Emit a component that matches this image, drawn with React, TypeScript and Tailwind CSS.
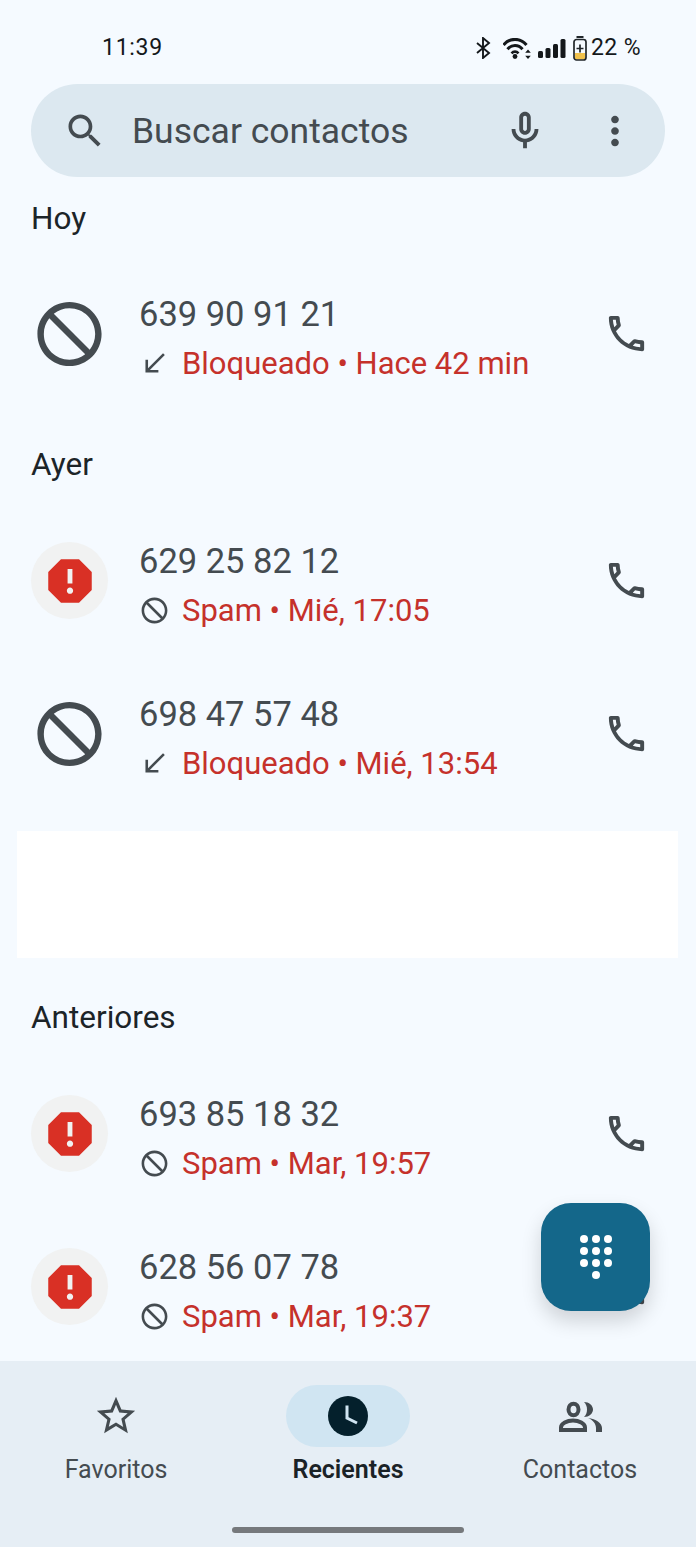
import { ReactNode } from "react"

const PATHS = {
  search:
    "M15.5 14h-.79l-.28-.27C15.41 12.59 16 11.11 16 9.5 16 5.91 13.09 3 9.5 3S3 5.91 3 9.5 5.91 16 9.5 16c1.61 0 3.09-.59 4.23-1.57l.27.28v.79l5 4.99L20.49 19l-4.99-5zm-6 0C7.01 14 5 11.99 5 9.5S7.01 5 9.5 5 14 7.01 14 9.5 11.99 14 9.5 14z",
  mic: "M12 14c1.66 0 3-1.34 3-3V5c0-1.66-1.34-3-3-3S9 3.34 9 5v6c0 1.66 1.34 3 3 3zm-1-9c0-.55.45-1 1-1s1 .45 1 1v6c0 .55-.45 1-1 1s-1-.45-1-1V5zM17 11c0 2.76-2.24 5-5 5s-5-2.24-5-5H5c0 3.53 2.61 6.43 6 6.92V21h2v-3.08c3.39-.49 6-3.39 6-6.92h-2z",
  more: "M12 8c1.1 0 2-.9 2-2s-.9-2-2-2-2 .9-2 2 .9 2 2 2zm0 2c-1.1 0-2 .9-2 2s.9 2 2 2 2-.9 2-2-.9-2-2-2zm0 6c-1.1 0-2 .9-2 2s.9 2 2 2 2-.9 2-2-.9-2-2-2z",
  block:
    "M12 2C6.48 2 2 6.48 2 12s4.48 10 10 10 10-4.48 10-10S17.52 2 12 2zM4 12c0-4.42 3.58-8 8-8 1.85 0 3.55.63 4.9 1.69L5.69 16.9C4.63 15.55 4 13.85 4 12zm8 8c-1.85 0-3.55-.63-4.9-1.69L18.31 7.1C19.37 8.45 20 10.15 20 12c0 4.42-3.58 8-8 8z",
  received: "M20 5.41L18.59 4 7 15.59V9H5v10h10v-2H8.41z",
  phone:
    "M6.54 5c.06.89.21 1.76.45 2.59l-1.2 1.2c-.41-1.2-.67-2.47-.76-3.79h1.51m9.86 12.02c.85.24 1.72.39 2.6.45v1.49c-1.32-.09-2.59-.35-3.8-.75l1.2-1.19M7.5 3H4c-.55 0-1 .45-1 1 0 9.39 7.61 17 17 17 .55 0 1-.45 1-1v-3.49c0-.55-.45-1-1-1-1.24 0-2.45-.2-3.57-.57-.1-.04-.21-.05-.31-.05-.26 0-.51.1-.71.29l-2.2 2.2c-2.83-1.45-5.15-3.76-6.59-6.59l2.2-2.2c.28-.28.36-.67.25-1.02C8.7 6.45 8.5 5.25 8.5 4c0-.55-.45-1-1-1z",
  report:
    "M15.73 3H8.27L3 8.27v7.46L8.27 21h7.46L21 15.73V8.27L15.73 3zM12 17.3c-.72 0-1.3-.58-1.3-1.3 0-.72.58-1.3 1.3-1.3.72 0 1.3.58 1.3 1.3 0 .72-.58 1.3-1.3 1.3zm1-4.3h-2V7h2v6z",
  star: "M22 9.24l-7.19-.62L12 2 9.19 8.63 2 9.24l5.46 4.73L5.82 21 12 17.27 18.18 21l-1.63-7.03L22 9.24zM12 15.4l-3.76 2.27 1-4.28-3.32-2.88 4.38-.38L12 6.1l1.71 4.04 4.38.38-3.32 2.88 1 4.28L12 15.4z",
}

function Icon({ d, className }: { d: string; className: string }) {
  return (
    <svg viewBox="0 0 24 24" fill="currentColor" className={className}>
      <path d={d} />
    </svg>
  )
}

function StatusBar() {
  return (
    <div className="flex h-[84px] items-start justify-between pl-[102px] pr-[55px] pt-[34px] text-[#14181b]">
      <span className="text-[23px] leading-[28px] tracking-[0.7px]">11:39</span>
      <div className="flex items-center">
        <svg viewBox="0 0 15 22" fill="none" stroke="currentColor" strokeWidth="1.9" className="h-[22px] w-[15px]">
          <path d="M1 6l12 10-6 5V1l6 5L1 16" />
        </svg>
        <svg viewBox="0 0 28 21" fill="currentColor" className="ml-[12px] h-[21px] w-[28px]">
          <path d="M0.5 7C6.500 -0.500 17.500 -0.500 23.500 7" fill="none" stroke="currentColor" strokeWidth="3" />
          <path d="M4.500 11.300C8.500 6.300 15.500 6.300 19.500 11.300" fill="none" stroke="currentColor" strokeWidth="3" />
          <path d="M8.500 15.300C10.500 13 13.500 13 15.500 15.300" fill="none" stroke="currentColor" strokeWidth="2.600" />
          <circle cx="12" cy="18.500" r="2.400" />
          <path d="M25 11.500l2.800 3.200h-5.600zM25 21l-2.800-3.200h5.600z" />
        </svg>
        <svg viewBox="0 0 28 19" fill="currentColor" className="ml-[7px] h-[19px] w-[28px]">
          <rect x="0" y="12" width="5" height="7" rx="1.500" />
          <rect x="7.500" y="9" width="5" height="10" rx="1.500" />
          <rect x="15" y="5" width="5" height="14" rx="1.500" />
          <rect x="22.500" y="0" width="5" height="19" rx="1.500" />
        </svg>
        <svg viewBox="0 0 14 25" className="ml-[7px] h-[25px] w-[14px]">
          <rect x="3.500" y="0" width="7" height="2" fill="#20262a" />
          <path d="M2 17h10v5a1.500 1.500 0 0 1-1.500 1.500h-7A1.500 1.500 0 0 1 2 22z" fill="#f0c14b" />
          <rect x="1" y="3.500" width="12" height="20.500" rx="2.500" fill="none" stroke="#20262a" strokeWidth="1.700" />
          <path d="M7 8.500v8M3.500 12.500h7" stroke="#20262a" strokeWidth="1.700" />
        </svg>
        <span className="ml-[4px] text-[23px] leading-[28px] tracking-[0.4px]">22 %</span>
      </div>
    </div>
  )
}

function SearchBar() {
  return (
    <div className="mx-[31px] flex h-[93px] items-center rounded-full bg-[#dce8f0] text-[#444b50]">
      <Icon d={PATHS.search} className="ml-[32px] h-[44px] w-[44px]" />
      <span className="ml-[25px] flex-1 pt-[2px] text-[35.500px] leading-none">Buscar contactos</span>
      <Icon d={PATHS.mic} className="h-[46px] w-[46px]" />
      <Icon d={PATHS.more} className="ml-[44px] mr-[27px] h-[46px] w-[46px]" />
    </div>
  )
}

function SectionTitle({ children, className = "" }: { children: ReactNode; className?: string }) {
  return (
    <div className={`flex h-[80px] items-center px-[31px] pt-[3px] text-[31.500px] leading-none text-[#1c2428] ${className}`}>
      {children}
    </div>
  )
}

type CallRow = {
  number: string
  detail: string
  spam?: boolean
}

function Row({ number, detail, spam }: CallRow) {
  return (
    <div className="flex h-[153px] items-center pl-[31px] pr-[46px] text-[#444b50]">
      {spam ? (
        <div className="flex h-[77px] w-[77px] shrink-0 items-center justify-center rounded-full bg-[#f1f2f2] text-[#d93025]">
          <Icon d={PATHS.report} className="h-[58px] w-[58px]" />
        </div>
      ) : (
        <div className="flex h-[77px] w-[77px] shrink-0 items-center justify-center">
          <Icon d={PATHS.block} className="h-[78px] w-[78px] -scale-x-100" />
        </div>
      )}
      <div className="ml-[31px] flex-1 pt-[10px]">
        <div className="text-[34.500px] leading-[46px]">{number}</div>
        <div className="mt-[4px] flex h-[46px] items-center">
          <Icon
            d={spam ? PATHS.block : PATHS.received}
            className={spam ? "h-[31px] w-[31px] -scale-x-100" : "h-[31px] w-[31px]"}
          />
          <span className="ml-[12px] text-[31px] leading-none text-[#c5312b]">{detail}</span>
        </div>
      </div>
      <Icon d={PATHS.phone} className="h-[47px] w-[47px]" />
    </div>
  )
}

function Dialpad() {
  const dots = [1, 2, 3, 4, 5, 6, 7, 8, 9]
  return (
    <div className="absolute left-[541px] top-[1203px] flex h-[108px] w-[109px] items-center justify-center rounded-[30px] bg-[#14678a] shadow-[0_10px_20px_rgba(0,0,0,0.16)]">
      <div className="grid grid-cols-3 gap-x-[4px] gap-y-[4px]">
        {dots.map((n) => (
          <span key={n} className="h-[8px] w-[8px] rounded-full bg-white" />
        ))}
        <span className="col-start-2 h-[8px] w-[8px] rounded-full bg-white" />
      </div>
    </div>
  )
}

function BottomNav() {
  return (
    <nav className="relative flex h-[186px] shrink-0 flex-col bg-[#e6eef5]">
      <div className="grid grid-cols-3 pt-[24px]">
        <div className="flex flex-col items-center text-[#444b50]">
          <div className="flex h-[62px] items-center justify-center">
            <Icon d={PATHS.star} className="h-[46px] w-[46px]" />
          </div>
          <span className="mt-[8px] text-[25px] leading-[30px]">Favoritos</span>
        </div>
        <div className="flex flex-col items-center text-[#1a2226]">
          <div className="flex h-[62px] w-[124px] items-center justify-center rounded-full bg-[#d0e5f2]">
            <svg viewBox="0 0 40 40" className="h-[40px] w-[40px]">
              <circle cx="20" cy="20" r="20" fill="#04202c" />
              <path d="M19 9.500V22l10 5" fill="none" stroke="#d0e5f2" strokeWidth="3" />
            </svg>
          </div>
          <span className="mt-[8px] text-[25px] font-semibold leading-[30px]">Recientes</span>
        </div>
        <div className="flex flex-col items-center text-[#444b50]">
          <div className="flex h-[62px] items-center justify-center">
            <svg viewBox="0 0 43 31" fill="currentColor" className="h-[31px] w-[43px]">
              <ellipse cx="14.500" cy="8.500" rx="5" ry="5.800" fill="none" stroke="currentColor" strokeWidth="4" />
              <path
                d="M2 29v-2.500c0-4 6-7 12-7s12 3 12 7v2.500z"
                fill="none"
                stroke="currentColor"
                strokeWidth="4"
              />
              <path d="M25 1c5 0 9 3.500 9 7.500S30 16 25 16c2-2 3-4.500 3-7.500S27 3 25 1z" />
              <path d="M29 17c8 1 14 5 14 10v4h-6v-4c0-4-3-8-8-10z" />
            </svg>
          </div>
          <span className="mt-[8px] text-[25px] leading-[30px]">Contactos</span>
        </div>
      </div>
      <div className="mx-auto mt-[42px] h-[6px] w-[232px] rounded-full bg-[#76797c]" />
    </nav>
  )
}

export default function App() {
  return (
    <div className="relative flex h-[1547px] w-[696px] flex-col overflow-hidden bg-[#f5faff] font-['Roboto',sans-serif]">
      <StatusBar />
      <SearchBar />
      <main className="min-h-0 flex-1 overflow-hidden">
        <SectionTitle>Hoy</SectionTitle>
        <Row number="639 90 91 21" detail="Bloqueado • Hace 42 min" />
        <div className="h-[13px]" />
        <SectionTitle className="mb-[1px]">Ayer</SectionTitle>
        <Row number="629 25 82 12" detail="Spam • Mié, 17:05" spam />
        <Row number="698 47 57 48" detail="Bloqueado • Mié, 13:54" />
        <div className="ml-[17px] mr-[18px] mt-[21px] mb-[18px] h-[127px] bg-white" />
        <SectionTitle className="mb-[1px]">Anteriores</SectionTitle>
        <Row number="693 85 18 32" detail="Spam • Mar, 19:57" spam />
        <Row number="628 56 07 78" detail="Spam • Mar, 19:37" spam />
      </main>
      <BottomNav />
      <Dialpad />
    </div>
  )
}
